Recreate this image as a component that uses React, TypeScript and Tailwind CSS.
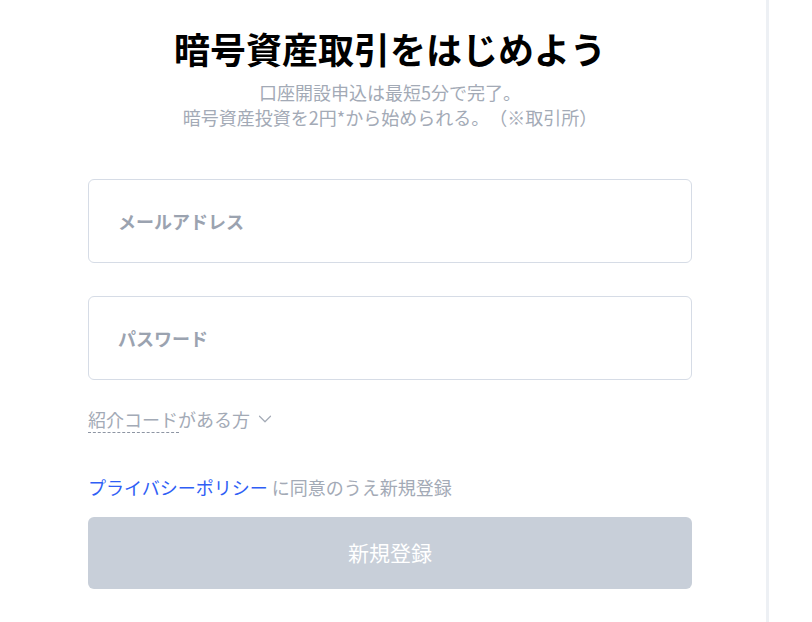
import { ChevronDown } from 'lucide-react'

const font = { fontFamily: '"Noto Sans CJK JP", "Noto Sans", sans-serif' }

export default function App() {
  return (
    <div className="flex h-[622px] w-[812px] bg-white text-[#1a1a1a]" style={font}>
      <div className="flex w-[766px] justify-start pl-[88px]">
        <div className="flex w-[604px] flex-col">
          <h1 className="mt-[22px] text-center text-[36px] font-bold leading-[52px] text-black">
            暗号資産取引をはじめよう
          </h1>
          <p className="mt-[6px] text-center text-[18px] leading-[25px] text-[#a3aab6] [text-spacing-trim:space-all]">
            口座開設申込は最短5分で完了。
            <br />
            暗号資産投資を2円*から始められる。（※取引所）
          </p>

          <div className="mt-[49px] flex flex-col gap-[33px]">
            <div className="flex h-[84px] items-center rounded-[6px] border border-[#d6dce6] px-[29px]">
              <span className="text-[18px] font-bold text-[#9ba3b0]">メールアドレス</span>
            </div>
            <div className="flex h-[84px] items-center rounded-[6px] border border-[#d6dce6] px-[29px]">
              <span className="text-[18px] font-bold text-[#9ba3b0]">パスワード</span>
            </div>
          </div>

          <div className="relative mt-[26px] flex items-center gap-[4px] text-[18px] leading-[26px] text-[#a3aab6]">
            <span>紹介コードがある方</span>
            <ChevronDown size={22} strokeWidth={1.3} />
            <span className="absolute left-0 top-[26px] w-[91px] border-b border-dashed border-[#8d95a3]" />
          </div>

          <p className="mt-[42px] text-[18px] leading-[26px] text-[#a3aab6]">
            <span className="text-[#2f5ef5]">プライバシーポリシー</span> に同意のうえ新規登録
          </p>

          <button className="mt-[17px] flex h-[72px] items-center justify-center rounded-[6px] bg-[#c8cfd9] text-[21px] text-white">
            新規登録
          </button>
        </div>
      </div>
      <div className="w-[3px] bg-[#edf0f4]" />
      <div className="flex-1" />
    </div>
  )
}
